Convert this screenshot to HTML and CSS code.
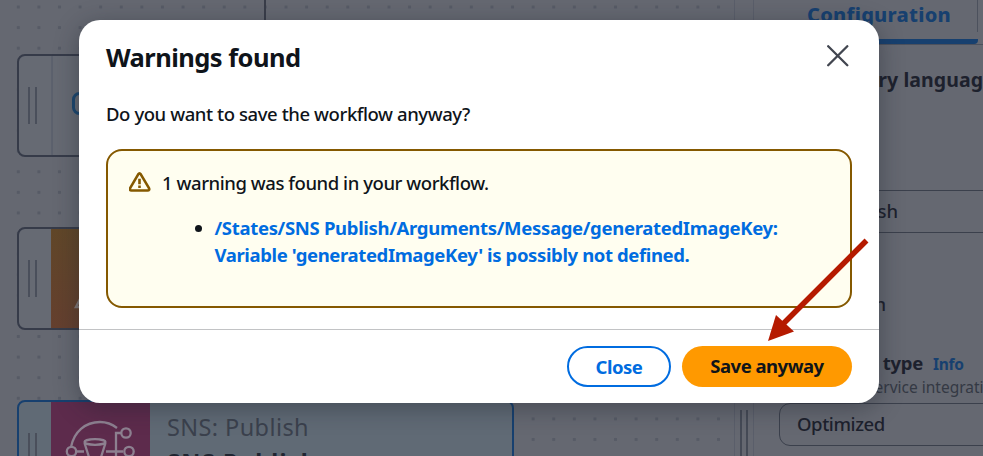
FILE: index.html
```html
<!DOCTYPE html>
<html lang="en">
<head>
<meta charset="utf-8">
<title>Workflow Studio</title>
<link rel="stylesheet" href="styles.css">
</head>
<body>
<div class="studio">
  <main class="canvas">
    <div class="connector"></div>
    <div class="node node-first"><div class="grip"><i></i><i></i></div>
      <svg class="choice" width="40" height="24" viewBox="0 0 40 24"><rect x="1.5" y="1.5" width="36" height="20" rx="6" fill="none" stroke="#1c476f" stroke-width="3"/></svg>
    </div>
    <div class="node node-lambda"><div class="grip"><i></i><i></i></div>
      <div class="tile tile-lambda"><svg width="99" height="99" viewBox="0 0 99 99"><path d="M25 78 40 49 48 64 39 78Z" fill="none" stroke="#817877" stroke-width="2.5"/></svg></div>
    </div>
    <div class="node node-sns"><div class="grip"><i></i><i></i></div>
      <div class="tile tile-sns">
        <svg width="99" height="99" viewBox="0 0 99 99" fill="none" stroke="#8d8090" stroke-width="2.3">
          <path d="M20 44C23 29 34 19 49 19c7 0 12 2 17 6M26 48.500h7M55 48.500h17M65 65V30h5"/>
          <circle cx="20.500" cy="48.500" r="4.700"/><circle cx="75" cy="30" r="4.700"/><circle cx="78" cy="48.500" r="4.700"/>
          <ellipse cx="44" cy="39" rx="10.500" ry="2.800"/><path d="m33.500 40 7 22h7l7-22"/>
        </svg>
      </div>
      <div class="node-text"><span class="node-kind">SNS: Publish</span><span class="node-name">SNS Publish</span></div>
    </div>
  </main>
  <div class="splitter"><i></i><i></i></div>
  <aside class="panel">
    <div class="tabs"><div class="tab">Configuration</div></div>
    <div class="query">Query language</div>
    <div class="field"><span>Publish</span></div>
    <div class="option"><span>Join</span></div>
    <div class="type-row"><b>type</b><a>Info</a></div>
    <div class="hint">Service integration</div>
    <div class="select">Optimized</div>
  </aside>
</div>
<section class="modal" role="dialog">
  <header class="modal-head"><h1>Warnings found</h1>
    <svg width="22" height="22" viewBox="0 0 22 22"><path d="M1.200 1.200 20.300 20.300M20.300 1.200 1.200 20.300" stroke="#424650" stroke-width="2.300" stroke-linecap="round"/></svg>
  </header>
  <div class="modal-body">
    <p class="question">Do you want to save the workflow anyway?</p>
    <div class="alert">
      <svg class="warn" width="22" height="20" viewBox="0 0 22 20"><path d="M9.200 2.300Q10.500.4 11.800 2.300L20 16.200Q20.900 18.500 18.600 18.500H2.400Q.2 18.500 1.100 16.200Z" fill="none" stroke="#855900" stroke-width="2.600" stroke-linejoin="round"/><path d="M10.500 6.700v5.500M10.500 13.500v2.500" stroke="#855900" stroke-width="2.600"/></svg>
      <div class="alert-text"><p>1 warning was found in your workflow.</p>
        <ul><li><a><span class="line-one">/States/SNS Publish/Arguments/Message/generatedImageKey:</span><br><span class="line-two">Variable 'generatedImageKey' is possibly not defined.</span></a></li></ul>
      </div>
    </div>
  </div>
  <footer class="modal-foot"><button class="close">Close</button><button class="save">Save anyway</button></footer>
</section>
<svg class="arrow" width="104" height="106" viewBox="0 0 104 106"><path d="M101.500 2.500 17 87" stroke="#b51a00" stroke-width="5.500"/><path d="M3 103 11 77 29 93.500Z" fill="#b51a00"/></svg>
</body>
</html>
```
FILE: styles.css
```css
* { box-sizing: border-box; }
body { margin: 0; width: 983px; height: 456px; overflow: hidden; background: #656871; font-family: "Noto Sans", sans-serif; font-weight: 500; color: #0f141a; }
h1, p, ul { margin: 0; }
.studio { display: flex; height: 456px; color: #1d212d; }
.canvas { position: relative; width: 734px; overflow: hidden; background: radial-gradient(circle, #575b66 1.4px, transparent 2px) 8px -3.300px / 20.600px 20.600px #656871; }
.connector { position: absolute; left: 264px; top: 0; width: 2px; height: 30px; background: #393d49; }
.node { position: absolute; left: 17px; width: 497px; height: 103px; display: flex; border: 2px solid #363b49; border-radius: 8px; background: #666a73; overflow: hidden; }
.node-first { top: 54px; }
.node-lambda { top: 227px; }
.node-sns { top: 400px; border-color: #17406f; background: #606a75; }
.grip { width: 32px; flex: none; display: flex; justify-content: center; align-items: center; gap: 5px; padding-right: 7px; }
.grip { padding: 0 6px 0 1px; }
.node-first .grip { width: 34px; border-right: 2px solid #5c616d; }
.grip i { width: 2px; height: 37px; background: #4a4f5b; }
.choice { margin: 36px 0 0 19px; }
.tile { width: 99px; height: 99px; flex: none; }
.tile-lambda { background: linear-gradient(#614729, #65402f); }
.tile-sns { background: #5d2b4c; }
.tile-sns svg { margin-top: 1px; display: block; }
.node-text { display: flex; flex-direction: column; padding: 8px 0 0 17px; font-size: 23.500px; line-height: 35px; white-space: nowrap; }
.node-kind { color: #3b414d; font-weight: 400; letter-spacing: .4px; }
.node-name { font-weight: 700; color: #202531; letter-spacing: 1.200px; }
.splitter { width: 20px; flex: none; display: flex; align-items: flex-end; justify-content: center; gap: 4px; border: solid #5a5e6a; border-width: 0 1px; }
.splitter i { width: 2px; height: 46px; background: #454a56; }
.panel { width: 229px; flex: none; overflow: hidden; }
.tabs { height: 45px; border-bottom: 1px solid #4c515d; }
.tab { width: 224px; height: 44px; padding: 1px 0 0 53px; border-bottom: 5px solid #17406f; border-radius: 0 0 4px 0; font-size: 20px; line-height: 27px; font-weight: 800; color: #17406f; white-space: nowrap; letter-spacing: .25px; background: linear-gradient(#4c515d, #4c515d) right top / 1px 32px no-repeat; }
.query { margin-top: 21px; height: 28px; width: 241px; text-align: right; font-size: 19.500px; line-height: 28px; font-weight: 700; letter-spacing: .1px; }
.field { margin: 96px 0 0 26px; height: 43px; border: 1px solid #3b404c; border-width: 1px 0; font-size: 18.500px; line-height: 40px; }
.field span { display: block; width: 118px; text-align: right; }
.option { margin-top: 57px; height: 28px; font-size: 18.500px; line-height: 28px; }
.option span { display: block; width: 132px; text-align: right; }
.type-row { margin-top: 32px; height: 26px; display: flex; align-items: baseline; gap: 10px; font-size: 18.500px; line-height: 26px; white-space: nowrap; }
.type-row b { width: 169px; display: flex; justify-content: flex-end; letter-spacing: -.3px; }
.type-row a { font-size: 15.500px; font-weight: 700; color: #17406f; letter-spacing: -.3px; }
.hint { margin: 1px 0 0 112px; height: 20px; font-size: 15.500px; line-height: 20px; font-weight: 400; color: #343944; white-space: nowrap; }
.select { margin: 6px 0 0 25px; width: 240px; height: 43px; padding-left: 17px; border: 1px solid #3b404c; border-radius: 11px; font-size: 18.500px; line-height: 40px; letter-spacing: -.4px; }
.modal { position: absolute; left: 79px; top: 20px; width: 800px; height: 383px; border-radius: 21px; background: #fff; box-shadow: 0 5px 25px rgba(25, 29, 40, .4); }
.modal-head { display: flex; justify-content: space-between; height: 79px; padding: 19px 30px 0 27px; }
.modal-head h1 { font-size: 25.500px; line-height: 36px; letter-spacing: -.55px; }
.modal-head svg { margin-top: 6px; }
.modal-body { height: 230px; padding: 0 27px; }
.question { height: 50px; font-size: 18.500px; line-height: 29px; letter-spacing: -.42px; }
.alert { height: 159px; display: flex; gap: 11px; padding: 18px 20px 18px 21px; border: 2px solid #855900; border-radius: 16px; background: #fffef0; font-size: 18.500px; line-height: 27px; }
.warn { margin-top: 3px; flex: none; }
.alert-text p { letter-spacing: -.44px; }
.alert ul { padding-left: 52.500px; margin-top: 18px; white-space: nowrap; }
.alert a { color: #006ce0; font-weight: 700; letter-spacing: -.32px; }
.alert .line-two { letter-spacing: -.38px; }
.modal-foot { height: 74px; display: flex; justify-content: flex-end; gap: 11px; padding: 16px 27px; border-top: 1px solid #c2c3c5; }
button { height: 41px; padding: 0 0 2px; border: 0; border-radius: 21px; font: 700 18.500px/37px "Noto Sans", sans-serif; letter-spacing: -.5px; }
.close { width: 104px; border: 2px solid #006ce0; background: #fff; color: #006ce0; }
.save { width: 170px; background: #ff9900; color: #0f141a; }
.arrow { position: absolute; left: 765px; top: 238px; }
```
